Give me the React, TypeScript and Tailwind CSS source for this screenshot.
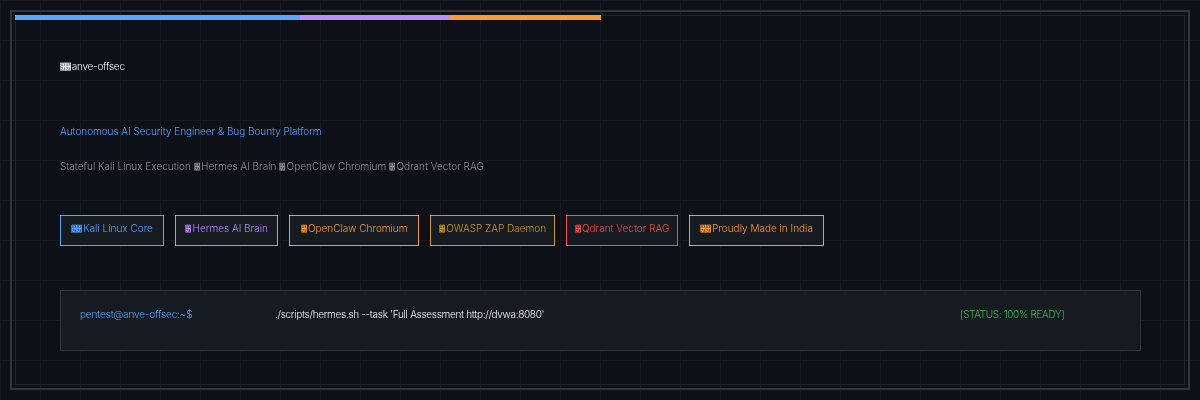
import type { ReactNode } from "react";

const Missing = () => (
  <span className="inline-block w-[4.6px] origin-left scale-x-[0.7] text-[9px] leading-none tracking-[0px]">{"\u0378"}</span>
);

const badges: { key: string; icon: ReactNode; label: string; width: string; tone: string }[] = [
  { key: "kali", icon: <><Missing /><Missing /></>, label: "Kali Linux Core", width: "w-[104px]", tone: "border-[#58a6ff] text-[#58a6ff]" },
  { key: "hermes", icon: <Missing />, label: "Hermes AI Brain", width: "w-[103px]", tone: "border-[#bc8cff] text-[#bc8cff]" },
  { key: "openclaw", icon: <Missing />, label: "OpenClaw Chromium", width: "w-[130px]", tone: "border-[#ff9a33] text-[#ff9a33]" },
  { key: "zap", icon: <Missing />, label: "OWASP ZAP Daemon", width: "w-[125px]", tone: "border-[#d29922] text-[#d29922]" },
  { key: "qdrant", icon: <Missing />, label: "Qdrant Vector RAG", width: "w-[112px]", tone: "border-[#f85149] text-[#f85149]" },
  { key: "india", icon: <><Missing /><Missing /></>, label: "Proudly Made in India", width: "w-[135px]", tone: "border-[#ff9a33] text-[#ff9a33]" },
];

export default function App() {
  return (
    <div className="h-[400px] w-[1200px] overflow-hidden bg-[#0d1117] bg-[linear-gradient(#161b22_1px,transparent_1px),linear-gradient(90deg,#161b22_1px,transparent_1px)] bg-[size:40px_40px] p-[10px] font-['Inter',sans-serif] text-[10px] font-light">
      <div className="h-[380px] border-2 border-[#30363d] p-[3px] [will-change:transform]">
        <div className="relative h-[370px] border border-[#21262d] pl-[44px]">
          <div className="absolute -left-px -top-px flex h-[5px]">
            <div className="w-[285px] bg-[#58a6ff]" />
            <div className="w-[150px] bg-[#bc8cff]" />
            <div className="w-[151px] bg-[#ff9a33]" />
          </div>

          <h1 className="h-[57px] pt-[43px] text-[10px] font-light leading-[14px] tracking-[-0.25px] text-[#f0f6fc]"><Missing /><Missing /> anve-offsec</h1>
          <p className="h-[65px] pt-[51px] leading-[14px] tracking-[-0.04px] text-[#58a6ff]">Autonomous AI Security Engineer &amp; Bug Bounty Platform</p>
          <p className="h-[35px] pt-[21px] leading-[14px] text-[#8b949e]">Stateful Kali Linux Execution <Missing /> Hermes AI Brain <Missing /> OpenClaw Chromium <Missing /> Qdrant Vector RAG</p>

          <div className="flex gap-[11px] pt-[42px]">
            {badges.map((badge) => (
              <div
                key={badge.key}
                className={`flex h-[31px] items-center justify-center whitespace-pre border bg-[#161b22] pb-[5px] ${badge.width} ${badge.tone}`}
              >
                <span>{badge.icon} {badge.label}</span>
              </div>
            ))}
          </div>

          <div className="mt-[44px] grid h-[61px] w-[1081px] grid-cols-[195px_685px_auto] border border-[#30363d] bg-[#161b22] pl-[19px] pt-[16px] leading-[14px]">
            <span className="tracking-[-0.15px] text-[#58a6ff]">pentest@anve-offsec:~$</span>
            <span className="tracking-[-0.3px] text-[#f0f6fc]">./scripts/hermes.sh --task 'Full Assessment http://dvwa:8080'</span>
            <span className="tracking-[-0.35px] text-[#3fb950]">[STATUS: 100% READY]</span>
          </div>
        </div>
      </div>
    </div>
  );
}
